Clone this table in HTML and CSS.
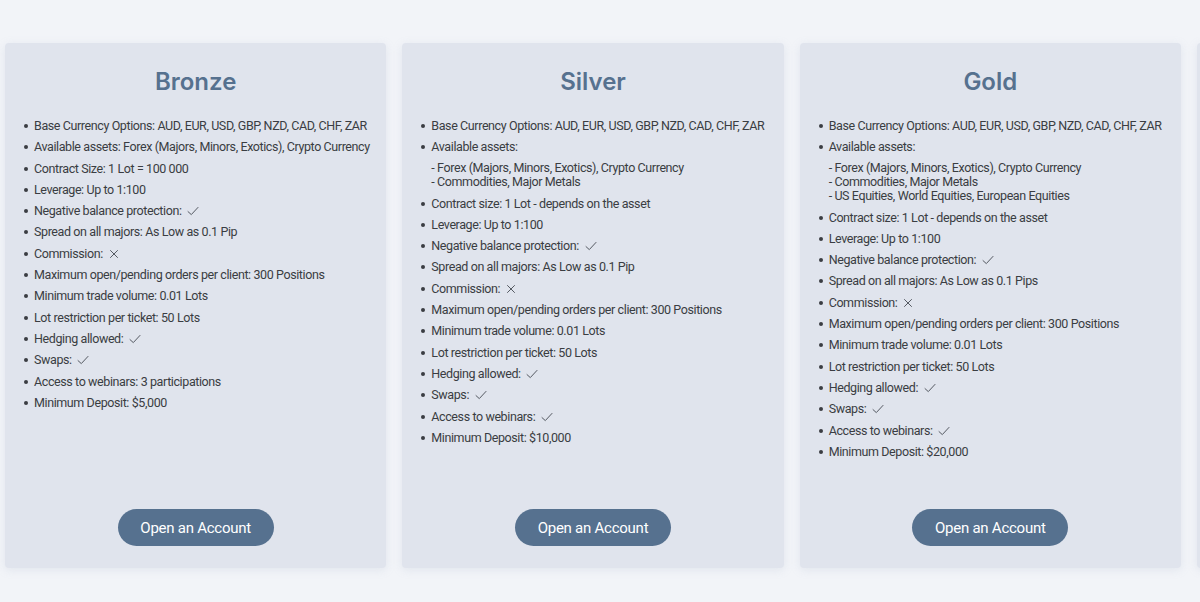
FILE: index.html
```html
<!DOCTYPE html>
<html lang="en">
<head>
<meta charset="utf-8">
<title>Account Types</title>
<link rel="stylesheet" href="styles.css">
</head>
<body>
<svg width="0" height="0" class="defs" aria-hidden="true">
  <defs>
    <symbol id="ok" viewBox="0 0 12 10"><path d="M1 5.6 L4.3 8.6 L11 1.4" fill="none" stroke="currentColor" stroke-width="1" stroke-linecap="round" stroke-linejoin="round"/></symbol>
    <symbol id="no" viewBox="0 0 10 10"><path d="M1.5 1.5 L8.5 8.5 M8.5 1.5 L1.5 8.5" fill="none" stroke="currentColor" stroke-width="1" stroke-linecap="round"/></symbol>
  </defs>
</svg>
<div class="track">
  <section class="card">
    <h2 class="title">Bronze</h2>
    <ul class="features">
      <li>Base Currency Options: AUD, EUR, USD, GBP, NZD, CAD, CHF, ZAR</li>
      <li>Available assets: Forex (Majors, Minors, Exotics), Crypto Currency</li>
      <li>Contract Size: 1 Lot = 100 000</li>
      <li>Leverage: Up to 1:100</li>
      <li>Negative balance protection: <svg class="ic ok"><use href="#ok"/></svg></li>
      <li>Spread on all majors: As Low as 0.1 Pip</li>
      <li>Commission: <svg class="ic no"><use href="#no"/></svg></li>
      <li>Maximum open/pending orders per client: 300 Positions</li>
      <li>Minimum trade volume: 0.01 Lots</li>
      <li>Lot restriction per ticket: 50 Lots</li>
      <li>Hedging allowed: <svg class="ic ok"><use href="#ok"/></svg></li>
      <li>Swaps: <svg class="ic ok"><use href="#ok"/></svg></li>
      <li>Access to webinars: 3 participations</li>
      <li>Minimum Deposit: $5,000</li>
    </ul>
    <a class="btn" href="#">Open an Account</a>
  </section>
  <section class="card">
    <h2 class="title">Silver</h2>
    <ul class="features">
      <li>Base Currency Options: AUD, EUR, USD, GBP, NZD, CAD, CHF, ZAR</li>
      <li>Available assets:
        <div class="sub">
          <div>- Forex (Majors, Minors, Exotics), Crypto Currency</div>
          <div>- Commodities, Major Metals</div>
        </div>
      </li>
      <li>Contract size: 1 Lot - depends on the asset</li>
      <li>Leverage: Up to 1:100</li>
      <li>Negative balance protection: <svg class="ic ok"><use href="#ok"/></svg></li>
      <li>Spread on all majors: As Low as 0.1 Pip</li>
      <li>Commission: <svg class="ic no"><use href="#no"/></svg></li>
      <li>Maximum open/pending orders per client: 300 Positions</li>
      <li>Minimum trade volume: 0.01 Lots</li>
      <li>Lot restriction per ticket: 50 Lots</li>
      <li>Hedging allowed: <svg class="ic ok"><use href="#ok"/></svg></li>
      <li>Swaps: <svg class="ic ok"><use href="#ok"/></svg></li>
      <li>Access to webinars: <svg class="ic ok"><use href="#ok"/></svg></li>
      <li>Minimum Deposit: $10,000</li>
    </ul>
    <a class="btn" href="#">Open an Account</a>
  </section>
  <section class="card">
    <h2 class="title">Gold</h2>
    <ul class="features">
      <li>Base Currency Options: AUD, EUR, USD, GBP, NZD, CAD, CHF, ZAR</li>
      <li>Available assets:
        <div class="sub">
          <div>- Forex (Majors, Minors, Exotics), Crypto Currency</div>
          <div>- Commodities, Major Metals</div>
          <div>- US Equities, World Equities, European Equities</div>
        </div>
      </li>
      <li>Contract size: 1 Lot - depends on the asset</li>
      <li>Leverage: Up to 1:100</li>
      <li>Negative balance protection: <svg class="ic ok"><use href="#ok"/></svg></li>
      <li>Spread on all majors: As Low as 0.1 Pips</li>
      <li>Commission: <svg class="ic no"><use href="#no"/></svg></li>
      <li>Maximum open/pending orders per client: 300 Positions</li>
      <li>Minimum trade volume: 0.01 Lots</li>
      <li>Lot restriction per ticket: 50 Lots</li>
      <li>Hedging allowed: <svg class="ic ok"><use href="#ok"/></svg></li>
      <li>Swaps: <svg class="ic ok"><use href="#ok"/></svg></li>
      <li>Access to webinars: <svg class="ic ok"><use href="#ok"/></svg></li>
      <li>Minimum Deposit: $20,000</li>
    </ul>
    <a class="btn" href="#">Open an Account</a>
  </section>
  <section class="card card-peek" aria-hidden="true"></section>
</div>
</body>
</html>
```

FILE: styles.css
```css
* { box-sizing: border-box; }

html, body {
  margin: 0;
  padding: 0;
  background: #f2f4f8;
  width: 1200px;
  height: 602px;
  overflow: hidden;
}

.defs {
  position: absolute;
  width: 0;
  height: 0;
}

.track {
  display: flex;
  gap: 16px;
  padding: 43px 0 0 5px;
  font-family: Roboto, "Liberation Sans", sans-serif;
}

.card {
  flex: 0 0 381.33px;
  min-width: 0;
  height: 525px;
  background: #e0e4ed;
  border-radius: 4px;
  box-shadow: 0 2px 10px rgba(150, 165, 195, 0.18);
  display: flex;
  flex-direction: column;
  padding: 24px 0 22px;
  overflow: hidden;
}

.title {
  margin: 0;
  font-family: Inter, Roboto, sans-serif;
  font-size: 24px;
  line-height: 29px;
  font-weight: 600;
  color: #56718f;
  text-align: center;
}

.features {
  margin: 23px 0 0;
  padding: 0 0 0 29px;
  list-style: none;
  font-size: 12.5px;
  letter-spacing: -0.4px;
  line-height: 14px;
  color: #3a3d42;
}

.features li {
  margin-bottom: 7.3px;
  white-space: nowrap;
}

.features li::before {
  content: "";
  display: inline-block;
  width: 4px;
  height: 4px;
  border-radius: 50%;
  background: #3a3d42;
  margin-left: -10px;
  margin-right: 6px;
  vertical-align: 2px;
}

.sub {
  margin-top: 7px;
  padding-left: 0;
}

.ic {
  display: inline-block;
  vertical-align: -1px;
  margin-left: 3px;
  color: #555a62;
}

.ic.ok { width: 12px; height: 10px; }
.ic.no { width: 10px; height: 10px; }

.btn {
  margin: auto auto 0;
  width: 156px;
  height: 37px;
  border-radius: 19px;
  background: #56718f;
  color: #ffffff;
  font-size: 15px;
  letter-spacing: -0.25px;
  text-decoration: none;
  display: flex;
  align-items: center;
  justify-content: center;
}
```
